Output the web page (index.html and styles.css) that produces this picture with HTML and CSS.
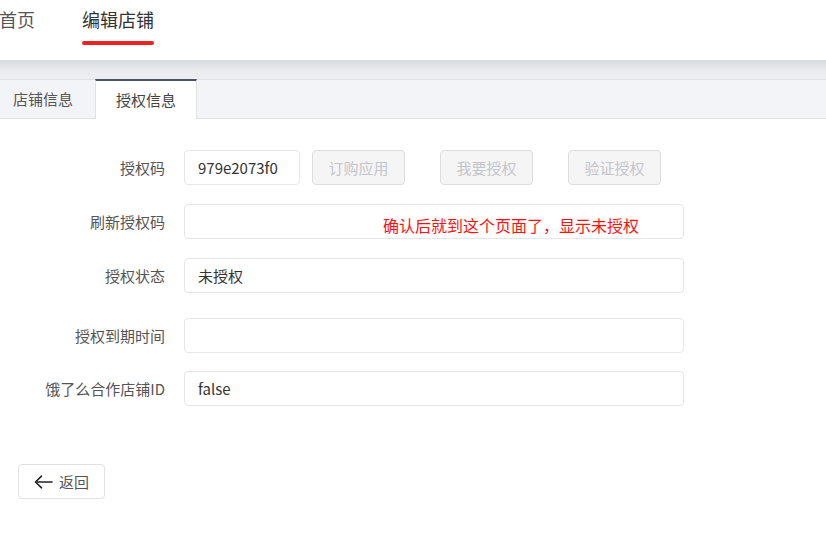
FILE: index.html
```html
<!DOCTYPE html>
<html lang="zh-CN">
<head>
<meta charset="utf-8">
<title>编辑店铺</title>
<link rel="stylesheet" href="styles.css">
</head>
<body>
<header class="topbar">
  <nav class="nav">
    <a class="nav-item">首页</a>
    <a class="nav-item active">编辑店铺</a>
  </nav>
</header>
<div class="shade"></div>
<div class="tabs">
  <div class="tab">店铺信息</div>
  <div class="tab active">授权信息</div>
</div>
<main class="content">
  <form class="form">
    <div class="row">
      <label class="label">授权码</label>
      <div class="field inline">
        <div class="input short">979e2073f0</div>
        <button type="button" class="btn disabled first">订购应用</button>
        <button type="button" class="btn disabled">我要授权</button>
        <button type="button" class="btn disabled">验证授权</button>
      </div>
    </div>
    <div class="row">
      <label class="label">刷新授权码</label>
      <div class="field">
        <div class="input"></div>
        <span class="note">确认后就到这个页面了，显示未授权</span>
      </div>
    </div>
    <div class="row spaced">
      <label class="label">授权状态</label>
      <div class="field"><div class="input">未授权</div></div>
    </div>
    <div class="row tight">
      <label class="label">授权到期时间</label>
      <div class="field"><div class="input"></div></div>
    </div>
    <div class="row">
      <label class="label">饿了么合作店铺ID</label>
      <div class="field"><div class="input">false</div></div>
    </div>
  </form>
  <button type="button" class="btn back">
    <svg class="arrow" width="19" height="14" viewBox="0 0 19 14" fill="none" stroke="#222" stroke-width="1.6" stroke-linecap="round" stroke-linejoin="round"><path d="M18 7H2"/><path d="M7.5 1.2L1.5 7l6 5.8"/></svg>
    <span>返回</span>
  </button>
</main>
</body>
</html>
```

FILE: styles.css
```css
* { box-sizing: border-box; }
html, body { margin: 0; padding: 0; background: #fff; }
body {
  font-family: "Noto Sans CJK SC", "Noto Sans", sans-serif;
  color: #333;
  width: 826px;
  height: 541px;
  overflow: hidden;
}
.topbar {
  height: 60px;
  background: #fff;
}
.nav {
  display: flex;
  gap: 47px;
}
.nav-item {
  display: block;
  height: 45px;
  padding-top: 5px;
  font-size: 18px;
  line-height: 28px;
  color: #555;
  position: relative;
}
.nav-item:first-child { margin-left: -1px; }
.nav-item.active { color: #333; }
.nav-item.active::after {
  content: "";
  position: absolute;
  left: 0;
  right: 0;
  bottom: 0;
  height: 4px;
  border-radius: 2px;
  background: #ee2222;
}
.shade {
  height: 19px;
  background: linear-gradient(#d9dadd, #eaebee 55%, #eeeff2);
}
.tabs {
  display: flex;
  height: 40px;
  background: #f3f4f7;
  border-top: 1px solid #e0e1e5;
  border-bottom: 1px solid #dfe0e3;
}
.tab {
  padding: 0 13px;
  width: 95px;
  font-size: 15px;
  line-height: 38px;
  color: #555;
}
.tab.active {
  width: 102px;
  padding: 0 20px;
  margin-top: -1px;
  height: 40px;
  background: #fff;
  border-top: 2px solid #4d5262;
  border-left: 1px solid #e0e1e5;
  border-right: 1px solid #e0e1e5;
  line-height: 37px;
  color: #444;
}
.content {
  padding: 31px 0 0 18px;
}
.form { display: flex; flex-direction: column; gap: 19px; }
.row {
  display: flex;
  align-items: center;
  height: 35px;
  margin-left: -18px;
}
.row.spaced { margin-bottom: 6px; }
.row.tight { margin-bottom: -1px; }
.label {
  width: 166px;
  padding-right: 1px;
  text-align: right;
  font-size: 15px;
  color: #555;
}
.field {
  margin-left: 18px;
  position: relative;
  display: flex;
  align-items: center;
}
.input {
  width: 500px;
  height: 35px;
  border: 1px solid #e4e6ea;
  border-radius: 4px;
  padding: 0 13px;
  font-size: 15px;
  line-height: 33px;
  color: #333;
}
.input.short { width: 116px; }
.btn {
  font-family: inherit;
  width: 93px;
  height: 35px;
  border: 1px solid #dcdfe6;
  border-radius: 4px;
  background: #fff;
  font-size: 15px;
  padding: 0;
  margin-left: 35px;
}
.btn.first { margin-left: 12px; }
.btn.disabled {
  background: #f5f5f6;
  color: #c3c5ca;
  border-color: #dcdde0;
}
.note {
  position: absolute;
  left: 199px;
  top: 10px;
  font-size: 16px;
  line-height: 22px;
  color: #ff1010;
  white-space: nowrap;
}
.back {
  margin-top: 58px;
  margin-left: 0;
  width: 87px;
  height: 35px;
  display: flex;
  align-items: center;
  padding-left: 15px;
  gap: 6px;
  color: #555;
  border-color: #dfe1e5;
}
.back span { font-size: 15px; line-height: 20px; }
```
